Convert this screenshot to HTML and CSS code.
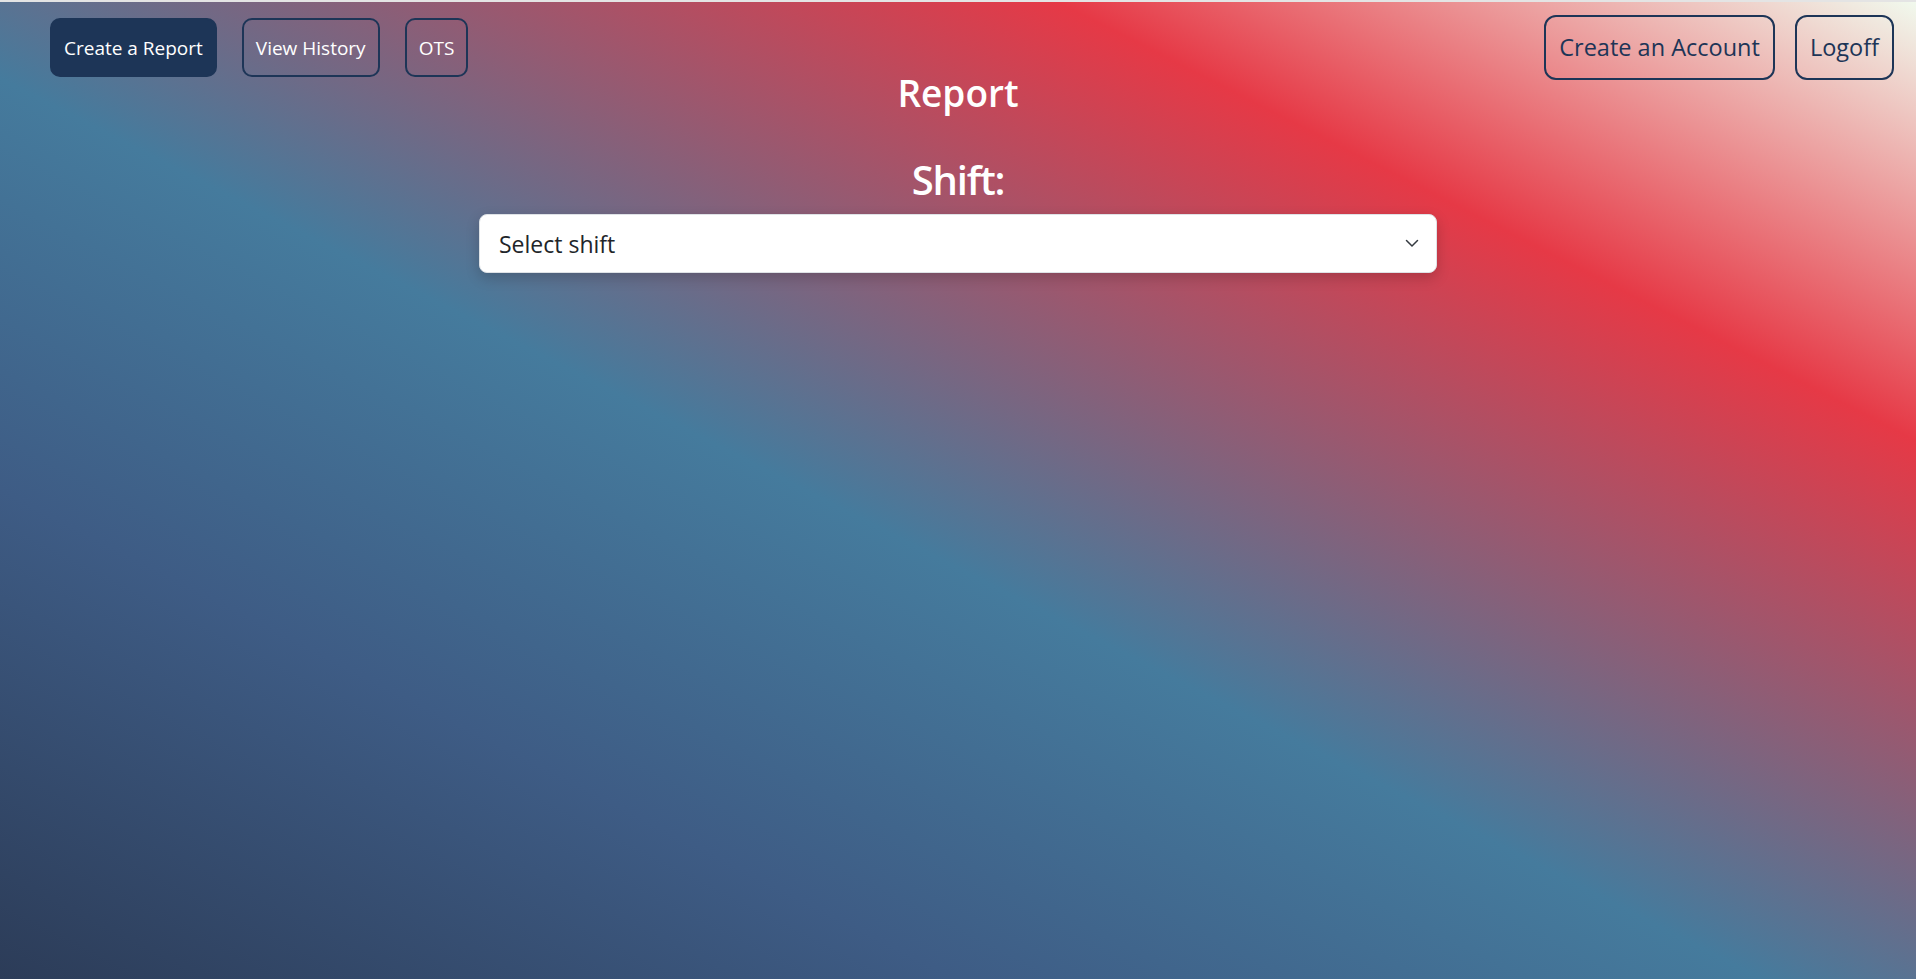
FILE: index.html
```html
<!DOCTYPE html>
<html lang="en">
<head>
<meta charset="utf-8">
<title>Report</title>
<link rel="stylesheet" href="styles.css">
</head>
<body>
  <div class="topline"></div>
  <header class="navbar">
    <nav class="nav-left">
      <a class="btn btn-solid" href="#">Create a Report</a>
      <a class="btn btn-outline-light" href="#">View History</a>
      <a class="btn btn-outline-light" href="#">OTS</a>
    </nav>
    <nav class="nav-right">
      <a class="btn btn-outline-dark" href="#">Create an Account</a>
      <a class="btn btn-outline-dark" href="#">Logoff</a>
    </nav>
  </header>
  <main class="content">
    <h2 class="title">Report</h2>
    <label class="field-label" for="shift">Shift:</label>
    <div class="select-wrap">
      <select id="shift" class="select">
        <option>Select shift</option>
        <option>Day</option>
        <option>Night</option>
      </select>
      <svg class="chevron" width="16" height="12" viewBox="0 0 16 12" aria-hidden="true">
        <path d="M2.5 3.5l5.5 5.5 5.5-5.5" fill="none" stroke="#343a40" stroke-width="1.5" stroke-linecap="round" stroke-linejoin="round"/>
      </svg>
    </div>
  </main>
</body>
</html>
```
FILE: styles.css
```css
* {
  box-sizing: border-box;
}

html, body {
  margin: 0;
  padding: 0;
}

body {
  min-height: 100vh;
  font-family: "Open Sans", "Noto Sans", sans-serif;
  background: linear-gradient(to top right,
    #2c3c58 0%,
    #3e5c85 25%,
    #457b9d 46%,
    #e63946 77.5%,
    #f1faee 100%);
  color: #fff;
}

.topline {
  height: 2px;
  background: #e4e4e4;
}

.navbar {
  display: flex;
  justify-content: space-between;
  align-items: flex-start;
  padding: 13px 22px 0 50px;
}

.nav-left {
  display: flex;
  gap: 25px;
  margin-top: 3px;
}

.nav-right {
  display: flex;
  gap: 20px;
}

.btn {
  display: inline-block;
  text-decoration: none;
  border: 2px solid #1d3557;
  white-space: nowrap;
}

.btn-solid,
.btn-outline-light {
  font-size: 19px;
  line-height: 28px;
  padding: 13.5px 12px;
  border-radius: 10px;
  color: #fff;
}

.btn-solid {
  background: #1d3557;
}

.btn-outline-light {
  background: transparent;
}

.btn-outline-dark {
  font-size: 23.5px;
  line-height: 33px;
  padding: 14px 13px;
  border-radius: 12px;
  color: #1d3557;
  background: transparent;
}

.content {
  display: flex;
  flex-direction: column;
  align-items: center;
  margin-top: -9px;
}

.title {
  margin: 0;
  font-size: 37px;
  line-height: 44px;
  font-weight: 600;
}

.field-label {
  margin-top: 40px;
  font-size: 40px;
  line-height: 49px;
  font-weight: 600;
  letter-spacing: -0.03em;
}

.select-wrap {
  position: relative;
  width: 50%;
  margin-top: 10px;
}

.select {
  display: block;
  width: 100%;
  height: 59px;
  padding: 0 48px 0 19px;
  font-family: "Open Sans", "Noto Sans", sans-serif;
  font-size: 23px;
  color: #212529;
  background: #fff;
  border: 1px solid #dee2e6;
  border-radius: 8px;
  box-shadow: 0 5px 14px rgba(0, 0, 0, 0.18);
  appearance: none;
  -webkit-appearance: none;
  outline: none;
}

.chevron {
  position: absolute;
  right: 17px;
  top: 50%;
  width: 16px;
  height: 12px;
  margin-top: -7px;
  pointer-events: none;
}
```
